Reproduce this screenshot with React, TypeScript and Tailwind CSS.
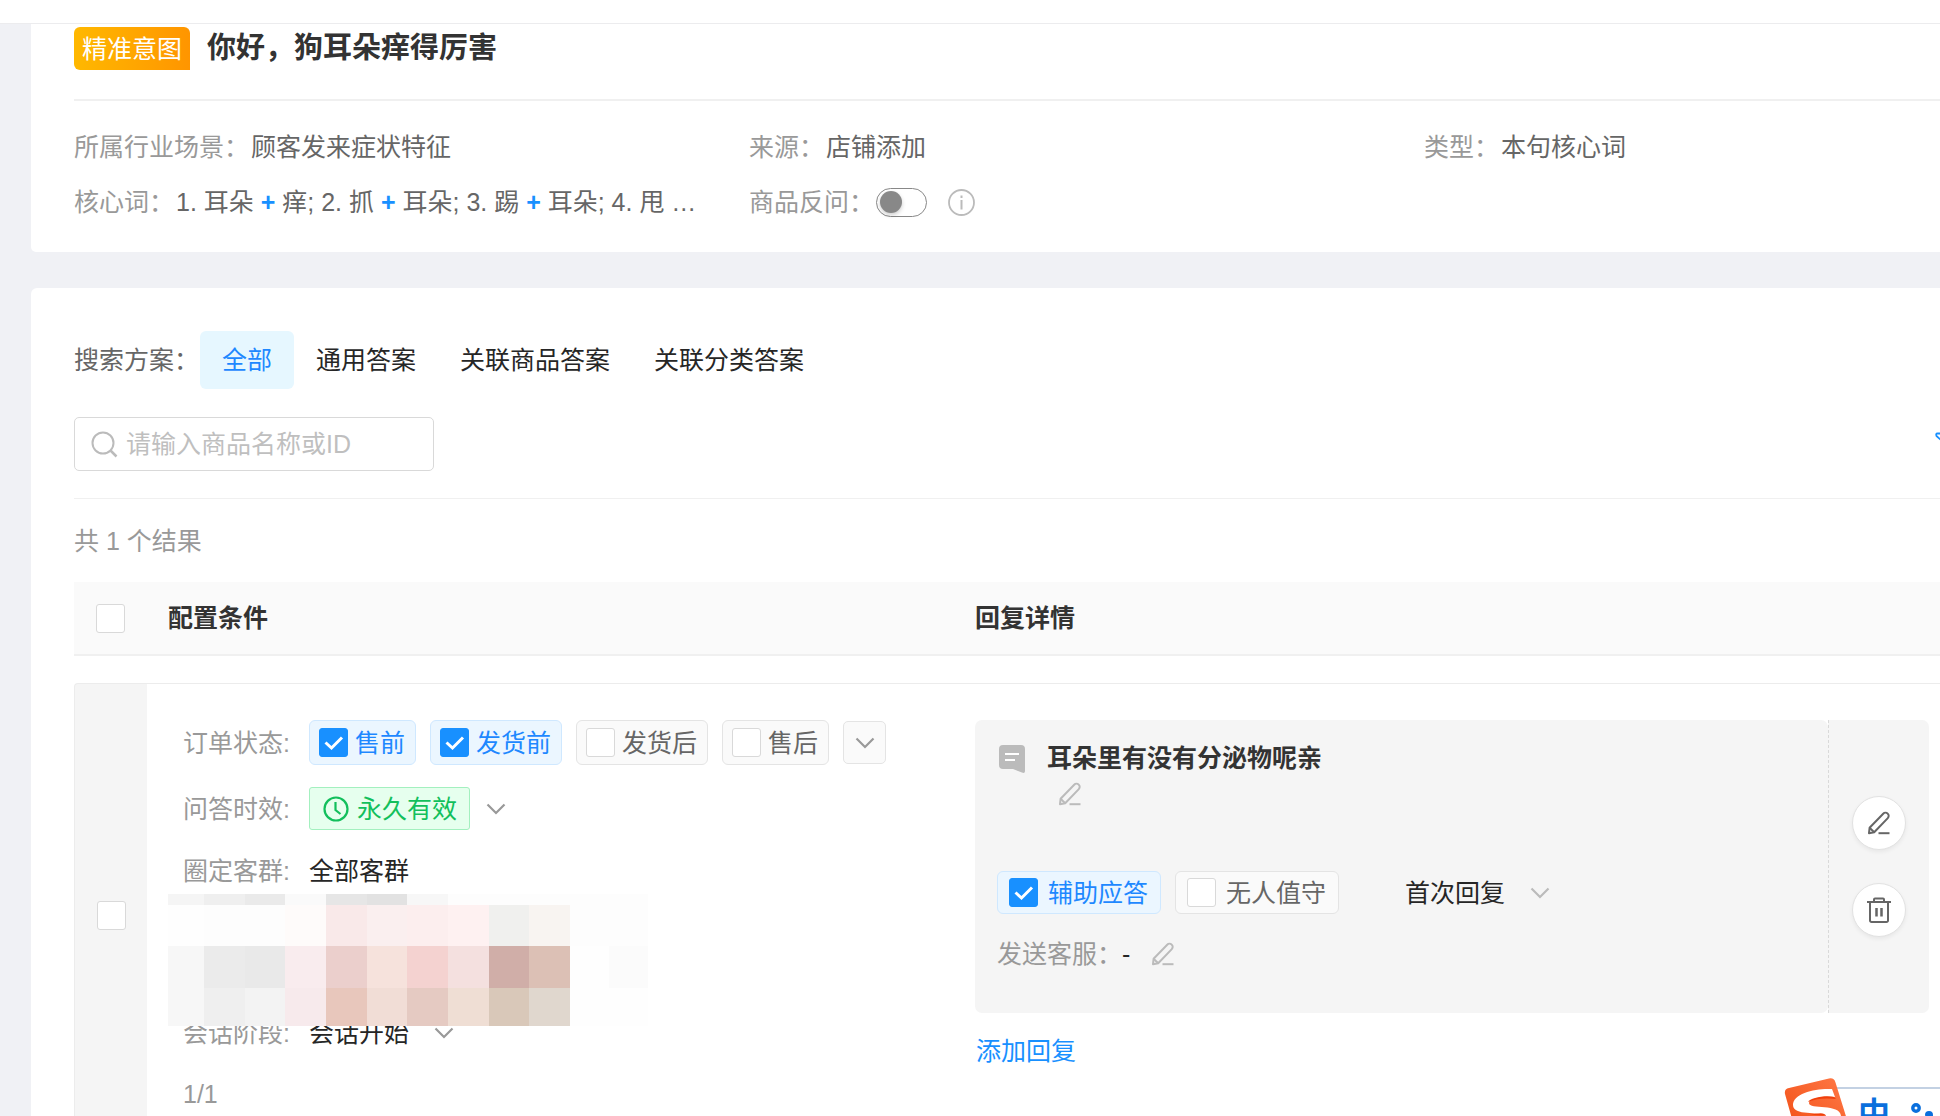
import React from "react";

const Chevron = ({ className }: { className?: string }) => (
  <svg className={`h-[20px] w-[20px] shrink-0 ${className || ""}`} viewBox="0 0 20 20" fill="none" stroke="currentColor" strokeWidth="2.200" aria-hidden="true">
    <path d="M1.500 5.500 10 14l8.500-8.500" />
  </svg>
);

const Pencil = ({ className }: { className?: string }) => (
  <svg className={`h-[24px] w-[24px] ${className || ""}`} viewBox="0 0 24 24" fill="none" stroke="currentColor" strokeWidth="2" strokeLinejoin="round" aria-hidden="true">
    <path d="M2 22.200l.6-5.400L16.200 2.700a3.100 3.100 0 0 1 4.600 4.400L7.200 21.200Z" />
    <path d="m2.600 16.800 4.600 4.400" />
    <path d="M11.500 22.200h11" />
  </svg>
);

interface CheckboxProps {
  id: string;
  label?: string;
  checked?: boolean;
}

const Checkbox: React.FC<CheckboxProps> = ({ id, label, checked }) => (
  <span className="relative mx-auto block h-[29px] w-[29px] shrink-0">
    <input
      id={id}
      type="checkbox"
      defaultChecked={checked}
      aria-label={label}
      className="peer block h-full w-full appearance-none rounded-[3px] border border-[#d9d9d9] bg-white checked:border-[#1890ff] checked:bg-[#1890ff]"
    />
    <svg className="pointer-events-none absolute inset-0 hidden peer-checked:block" viewBox="0 0 29 29" fill="none" stroke="#fff" strokeWidth="3" aria-hidden="true">
      <path d="m6.500 14.500 6 5.500L23 9.500" />
    </svg>
  </span>
);

interface ChipProps extends CheckboxProps {
  wide?: boolean;
}

const Chip: React.FC<ChipProps> = ({ id, label, checked, wide }) => (
  <label
    htmlFor={id}
    className={`flex items-center whitespace-nowrap rounded-[6px] border ${wide ? "h-[43px] gap-[10px] pl-[11px] pr-[12px]" : "h-[45px] gap-[7px] pl-[9px] pr-[10px]"} ${
      checked ? "border-[#cfe8ff] bg-[#ebf6ff] text-[#1e88ff]" : "border-[#e4e4e4] bg-[#fafafa] text-[#666]"
    }`}
  >
    <Checkbox id={id} checked={checked} />
    <span>{label}</span>
  </label>
);

interface PickerProps {
  label: string;
  value: string;
  className?: string;
}

const Picker: React.FC<PickerProps> = ({ label, value, className }) => (
  <span className="relative inline-flex items-center">
    <select aria-label={label} className="h-[36px] appearance-none bg-transparent pr-[44px] leading-[36px] text-[#262626] outline-none">
      <option>{value}</option>
    </select>
    <Chevron className={`pointer-events-none absolute right-0 ${className || ""}`} />
  </span>
);

const tabs = ["全部", "通用答案", "关联商品答案", "关联分类答案"];

const mosaic = [
  ["#f5f5f5", "#efefef", "#eaeaea", "#fafafa", "#e6e6e6", "#e2e2e2", "#f7f7f7", "#fdfdfd", "#fdfdfd", "#fdfdfd", "#fdfdfd", "#fdfdfd"],
  ["#fefefe", "#fdfdfd", "#fdfdfd", "#fefbfa", "#f9e9e9", "#faefef", "#fceeee", "#fef1f1", "#f0f0ee", "#f8f4f1", "#fdfdfd", "#fdfdfd"],
  ["#f7f7f7", "#ebebeb", "#e9e9e9", "#f9ecee", "#ebcfcc", "#f6e2dc", "#f4d2d0", "#f4e0df", "#d0aea8", "#dcc0b5", "#fefefe", "#fbfbfb"],
  ["#f7f7f7", "#efefef", "#f3f3f3", "#f7eaec", "#e8c7bc", "#f1ddd6", "#e5cac2", "#efded4", "#d9c8b9", "#e0d7ce", "#fefefe", "#fefefe"],
];

const roundBtn =
  "flex h-[54px] w-[54px] items-center justify-center rounded-full border border-[#e2e2e2] bg-white text-[#666] shadow-[0_2px_4px_rgba(0,0,0,0.06)]";

const IntentCard = () => (
  <section className="ml-[31px] rounded-bl-[5px] bg-white pb-[32px] pl-[43px] pt-[3px]">
    <div className="flex items-center gap-[17px]">
      <span className="flex h-[43px] items-center rounded-[6px] rounded-br-none bg-linear-to-r from-[#ffb800] to-[#ff9500] px-[8px] text-white">
        精准意图
      </span>
      <h1 className="text-[29px] font-bold leading-[43px] text-[#333]">你好，狗耳朵痒得厉害</h1>
    </div>
    <div className="mt-[29px] grid grid-cols-[675fr_675fr_516fr] gap-y-[19px] border-t-2 border-[#f0f0f0] pt-[28px] text-[#999]">
      <p className="whitespace-nowrap">
        所属行业场景：<span className="ml-[2px] text-[#666]">顾客发来症状特征</span>
      </p>
      <p>
        来源：<span className="ml-[2px] text-[#666]">店铺添加</span>
      </p>
      <p>
        类型：<span className="ml-[2px] text-[#666]">本句核心词</span>
      </p>
      <p className="whitespace-nowrap">
        核心词：
        <span className="ml-[2px] text-[#666]">
          1. 耳朵 <b className="text-[#1890ff]">+</b> 痒; 2. 抓 <b className="text-[#1890ff]">+</b> 耳朵; 3. 踢{" "}
          <b className="text-[#1890ff]">+</b> 耳朵; 4. 甩 …
        </span>
      </p>
      <div className="flex items-center">
        <label htmlFor="ask-back">商品反问：</label>
        <span className="relative ml-[2px] flex h-[29px] w-[51px]">
          <input id="ask-back" type="checkbox" role="switch" className="h-full w-full appearance-none rounded-full border border-[#888] bg-white" />
          <span className="pointer-events-none absolute left-[4px] top-[3px] h-[22px] w-[22px] rounded-full bg-[#888] shadow-[0_2px_4px_rgba(0,0,0,0.2)]" />
        </span>
        <svg className="ml-[21px] h-[27px] w-[27px]" viewBox="0 0 27 27" fill="none" stroke="#bbb" strokeWidth="1.800" aria-hidden="true">
          <circle cx="13.500" cy="13.500" r="12.500" />
          <path d="M13.500 11v9.500M13.500 6.500v2.500" strokeWidth="2" />
        </svg>
      </div>
    </div>
  </section>
);

const Conditions = () => (
  <div className="relative flex flex-col items-start pb-[34px] pl-[36px] pt-[36px] text-[#999]">
    <div className="flex items-center gap-[14px]">
      <span className="w-[112px]">订单状态:</span>
      <Chip id="pre-sale" label="售前" checked />
      <Chip id="pre-ship" label="发货前" checked />
      <Chip id="post-ship" label="发货后" />
      <Chip id="after-sale" label="售后" />
      <button type="button" aria-label="更多状态" className="flex h-[43px] w-[43px] items-center justify-center rounded-[5px] border border-[#e4e4e4] bg-[#fafafa]">
        <Chevron />
      </button>
    </div>
    <div className="mt-[22px] flex items-center gap-[14px]">
      <span className="w-[112px]">问答时效:</span>
      <span className="flex h-[43px] items-center gap-[8px] rounded-[3px] border border-[#a3f0bf] bg-[#e6ffee] pl-[13px] pr-[12px] text-[#12bf5c]">
        <svg className="h-[26px] w-[26px]" viewBox="0 0 26 26" fill="none" stroke="currentColor" strokeWidth="2.200" aria-hidden="true">
          <circle cx="13" cy="13" r="11.500" />
          <path d="M12.500 6v8l5 4" />
        </svg>
        永久有效
      </span>
      <button type="button" aria-label="修改时效" className="ml-[2px]">
        <Chevron />
      </button>
    </div>
    <div className="mt-[23px] flex gap-[14px]">
      <span className="w-[112px]">圈定客群:</span>
      <span className="text-[#262626]">全部客群</span>
    </div>
    <div className="mt-[126px] flex gap-[14px]">
      <span className="w-[112px]">会话阶段:</span>
      <Picker label="会话阶段" value="会话开始" />
    </div>
    <div className="mt-[25px]">1/1</div>
    {/* contenido oculto */}
    <div className="absolute left-[21px] top-[210px] grid h-[132px] w-[480px] grid-cols-[36px_repeat(9,1fr)_39px_39px] grid-rows-[11px_41px_42px_38px]">
      {mosaic.flat().map((color, i) => (
        <span key={i} style={{ backgroundColor: color }} />
      ))}
    </div>
  </div>
);

const Reply = () => (
  <div className="pr-[11px] pt-[36px]">
    <div className="flex">
      <div className="h-[293px] flex-1 rounded-[7px] bg-[#f5f5f5] pl-[22px] pt-[20px]">
        <div className="flex items-start">
          <svg className="ml-[2px] mt-[5px] h-[28px] w-[26px]" viewBox="0 0 26 28" aria-hidden="true">
            <path d="M4 0h18a4 4 0 0 1 4 4v22c0 2-1.500 2.500-3 1.500L14 24H4a4 4 0 0 1-4-4V4a4 4 0 0 1 4-4Z" fill="#bbb" />
            <path d="M6 9h14M6 15h10" stroke="#fff" strokeWidth="2" />
          </svg>
          <div className="ml-[22px]">
            <div className="font-bold text-[#333]">耳朵里有没有分泌物呢亲</div>
            <button type="button" aria-label="编辑内容" className="ml-[11px] mt-[6px] block text-[#bbb]">
              <Pencil />
            </button>
          </div>
        </div>
        <div className="mt-[65px] flex items-center gap-[14px]">
          <Chip id="assist" label="辅助应答" checked wide />
          <Chip id="unattended" label="无人值守" wide />
          <span className="ml-[52px]">
            <Picker label="回复时机" value="首次回复" className="text-[#bbb]" />
          </span>
        </div>
        <div className="mt-[22px] flex items-center text-[#999]">
          发送客服：<span className="text-[#262626]">-</span>
          <button type="button" aria-label="编辑客服" className="ml-[21px] text-[#bbb]">
            <Pencil />
          </button>
        </div>
      </div>
      <div className="flex w-[101px] flex-col items-center justify-center gap-[33px] rounded-r-[7px] border-l border-dashed border-[#d9d9d9] bg-[#f5f5f5]">
        <button type="button" aria-label="编辑" className={roundBtn}>
          <Pencil />
        </button>
        <button type="button" aria-label="删除" className={roundBtn}>
          <svg className="h-[26px] w-[26px]" viewBox="0 0 26 26" fill="none" stroke="currentColor" strokeWidth="2" strokeLinejoin="round" aria-hidden="true">
            <path d="M1 5h24M8 5V2.500a1 1 0 0 1 1-1h8a1 1 0 0 1 1 1V5M4 5v18.500a1.500 1.500 0 0 0 1.500 1.500h15a1.500 1.500 0 0 0 1.500-1.500V5" />
            <path d="M10.500 11v8.500M15.500 11v8.500" strokeWidth="2.500" />
          </svg>
        </button>
      </div>
    </div>
    <a href="#" className="ml-[1px] mt-[20px] inline-block text-[#1890ff]">
      添加回复
    </a>
  </div>
);

const AnswerCard = () => (
  <section className="ml-[31px] mt-[36px] rounded-tl-[6px] bg-white pl-[43px] pt-[43px]">
    <div className="flex items-center">
      <span className="w-[126px] text-[#666]">搜索方案：</span>
      {tabs.map((tab, index) => (
        <button
          type="button"
          key={tab}
          className={`h-[58px] rounded-[6px] px-[22px] ${index === 0 ? "bg-[#e6f7ff] text-[#1e88ff]" : "text-[#262626]"}`}
        >
          {tab}
        </button>
      ))}
    </div>
    <div className="mt-[28px] flex items-start justify-between">
      <label htmlFor="goods" className="flex h-[54px] w-[360px] items-center gap-[8px] rounded-[5px] border border-[#d9d9d9] pl-[16px]">
        <svg className="h-[27px] w-[27px] shrink-0" viewBox="0 0 27 27" fill="none" stroke="#bbb" strokeWidth="2" aria-hidden="true">
          <circle cx="12" cy="12" r="10.500" />
          <path d="m19.500 19.500 6 6" strokeWidth="2.500" />
        </svg>
        <input id="goods" type="text" placeholder="请输入商品名称或ID" className="w-full bg-transparent outline-none placeholder:text-[#bfbfbf]" />
      </label>
      <button type="button" aria-label="筛选" className="-mr-[20px] mt-[14px] shrink-0">
        <svg className="h-[25px] w-[25px]" viewBox="0 0 25 25" fill="none" stroke="#1890ff" strokeWidth="1.800" strokeLinejoin="round" aria-hidden="true">
          <path d="M2.500 2.500h21q1 0 0 1.500l-7 9v10l-6-3v-7L1.500 5q-1-2.500 1-2.500Z" />
        </svg>
      </button>
    </div>
    <div className="mt-[27px] flex h-[84px] items-center border-t border-[#f0f0f0] text-[#999]">共 1 个结果</div>
    <table className="w-full table-fixed border-separate border-spacing-0 text-left">
      <thead>
        <tr className="h-[74px]">
          <th className="w-[73px] border-b-2 border-[#f0f0f0] bg-[#fafafa]">
            <Checkbox id="pick-all" label="全选" />
          </th>
          <th className="w-[828px] border-b-2 border-[#f0f0f0] bg-[#fafafa] pl-[21px] text-[#333]">配置条件</th>
          <th className="border-b-2 border-[#f0f0f0] bg-[#fafafa] text-[#333]">回复详情</th>
        </tr>
      </thead>
      <tbody>
        <tr className="h-[27px]" aria-hidden="true">
          <td colSpan={3} />
        </tr>
        <tr>
          <td className="rounded-tl-[4px] border-l border-t border-[#ececec] bg-[#f5f5f5] align-middle">
            <Checkbox id="pick-1" label="选择" />
          </td>
          <td className="border-t border-[#ececec] align-top">
            <Conditions />
          </td>
          <td className="border-t border-[#ececec] align-top">
            <Reply />
          </td>
        </tr>
      </tbody>
    </table>
  </section>
);

const InputMethodBar = () => (
  <div className="fixed bottom-0 right-0 flex h-[38px] w-[158px] overflow-hidden">
    <div className="ml-[50px] mt-[9px] flex flex-1 border-t-2 border-[#c3d1e3] bg-white pl-[26px] text-[32px] font-bold leading-[50px] text-[#0a6fdd]">
      <span>中</span>
      <svg className="ml-[18px] mt-[12px] h-[24px] w-[32px] shrink-0" viewBox="0 0 32 24" aria-hidden="true">
        <circle cx="8" cy="7" r="3.200" fill="none" stroke="#0a6fdd" strokeWidth="3.400" />
        <path d="M17 14a4 4 0 1 1 8 0q0 5-6 7 2-3 1-4a4 4 0 0 1-3-3Z" fill="#0a6fdd" />
      </svg>
    </div>
    <svg className="absolute left-0 top-0 h-[70px] w-[70px]" viewBox="0 0 70 70" aria-hidden="true">
      <defs>
        <linearGradient id="ime" x1="1" y1="0" x2="0" y2="1">
          <stop offset="0" stopColor="#ff7a48" />
          <stop offset="1" stopColor="#f04a10" />
        </linearGradient>
      </defs>
      <path d="M7 10 47 .5q5-1 6.500 4L67 48q1 4-3 6L22 66q-4 1-6-4L3 16q-1-5 4-6Z" fill="url(#ime)" />
      <path d="M50 11C34 10 11 15 11 27c0 13 35 4 33 14-1 5-22 7-29 5l2 9c20 2 43-3 42-17-1-13-32-6-32-13 0-5 17-7 26-6Z" fill="#fff" />
      <path d="M52 19c-9-2-24 1-26 5 8-4 20-4 28-3ZM28 37c8-2 15-3 16 1-4-1-10-1-16-1Z" fill="#f0400c" />
    </svg>
  </div>
);

export default function App() {
  return (
    <main className='h-screen overflow-hidden bg-[#f0f1f5] font-["Liberation_Sans","Noto_Sans_CJK_SC",sans-serif] text-[25px] leading-[36px]'>
      <header className="h-[24px] border-b border-[#ececee] bg-white" />
      <IntentCard />
      <AnswerCard />
      <InputMethodBar />
    </main>
  );
}
